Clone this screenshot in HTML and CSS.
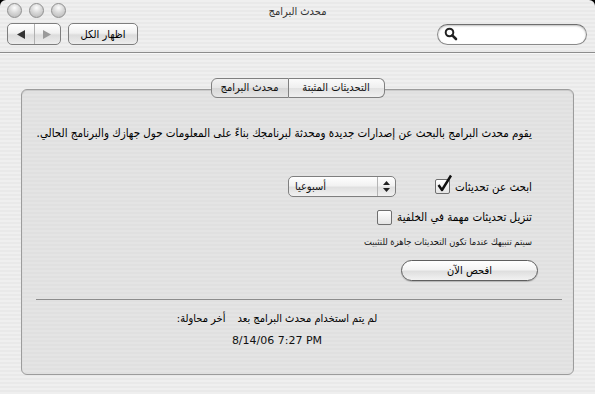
FILE: index.html
```html
<!DOCTYPE html>
<html lang="ar">
<head>
    <meta charset="UTF-8">
    <title>محدث البرامج</title>
    <link rel="stylesheet" href="styles.css">
</head>
<body>

<div class="window">
    <header class="chrome">
        <div class="titlebar">
            <div class="lights"><span></span><span></span><span></span></div>
            <div class="title" dir="rtl">محدث البرامج</div>
            <div></div>
        </div>
        <div class="toolbar">
            <div class="nav">
                <span class="nav-seg">
                    <svg width="10" height="9" viewBox="0 0 10 9"><path d="M1 4.5 L9 0 L9 9 Z" fill="#333"/></svg>
                </span>
                <span class="nav-seg">
                    <svg width="10" height="9" viewBox="0 0 10 9"><path d="M9 4.5 L1 0 L1 9 Z" fill="#9a9a9a"/></svg>
                </span>
            </div>
            <button class="tool-btn" dir="rtl">اظهار الكل</button>
            <div class="spacer"></div>
            <div class="search">
                <svg width="14" height="14" viewBox="0 0 14 14">
                    <circle cx="5.5" cy="5.5" r="3.8" fill="none" stroke="#222" stroke-width="2"/>
                    <path d="M8.3 8.3 L12 12" stroke="#222" stroke-width="2.6" stroke-linecap="round"/>
                </svg>
            </div>
        </div>
    </header>

    <main class="content">
        <div class="tabs">
            <span class="tab">محدث البرامج</span>
            <span class="tab tab-on">التحديثات المثبتة</span>
        </div>

        <section class="box">
            <p class="desc" dir="rtl">يقوم محدث البرامج بالبحث عن إصدارات جديدة ومحدثة لبرنامجك بناءً على المعلومات حول جهازك والبرنامج الحالي.</p>

            <div class="row row-check" dir="rtl">
                <span class="label">ابحث عن تحديثات</span>
                <span class="checkbox">
                    <svg width="18" height="20" viewBox="0 0 18 20"><path d="M3.5 11 L7 16 L16 1.5" fill="none" stroke="#111" stroke-width="2.4" stroke-linejoin="round"/></svg>
                </span>
                <span class="popup">
                    <span class="popup-arrows">
                        <svg width="7" height="11" viewBox="0 0 7 11"><path d="M3.5 0 L7 4 L0 4 Z M3.5 11 L7 7 L0 7 Z" fill="#222"/></svg>
                    </span>
                    <span class="popup-text">أسبوعيا</span>
                </span>
            </div>

            <div class="row row-bg" dir="rtl">
                <span class="label">تنزيل تحديثات مهمة في الخلفية</span>
                <span class="checkbox"></span>
            </div>

            <div class="row row-note" dir="rtl">
                <span class="note">سيتم تنبيهك عندما تكون التحديثات جاهزة للتثبيت</span>
            </div>

            <div class="row row-btn" dir="rtl">
                <button class="pill-btn">افحص الآن</button>
            </div>

            <hr class="sep">

            <div class="last" dir="rtl">
                <span>لم يتم استخدام محدث البرامج بعد</span>
                <span>أخر محاولة:</span>
            </div>
            <div class="date">8/14/06 7:27 PM</div>
        </section>
    </main>
</div>

</body>
</html>
```

FILE: styles.css
```css
html, body {
    margin: 0;
    background-color: #000;
}

body {
    font-family: "DejaVu Sans Condensed", "DejaVu Sans", sans-serif;
    color: #111;
    width: 595px;
    height: 394px;
    overflow: hidden;
}

.window {
    width: 595px;
    height: 394px;
    border-radius: 6px 6px 0 0;
    overflow: hidden;
    background: repeating-linear-gradient(to bottom, #efefef 0, #efefef 2px, #e9e9e9 2px, #e9e9e9 4px);
    display: flex;
    flex-direction: column;
}

/* title bar + toolbar */
.chrome {
    border-bottom: 1px solid #8c8c8c;
    box-shadow: 0 1px 0 #f8f8f8;
}

.titlebar {
    height: 22px;
    display: grid;
    grid-template-columns: 1fr auto 1fr;
    align-items: center;
}

.lights {
    display: flex;
    gap: 7px;
    padding-left: 7px;
    align-self: start;
    padding-top: 3px;
}

.lights span {
    width: 13px;
    height: 13px;
    border-radius: 50%;
    border: 1px solid #8f8f8f;
    background: radial-gradient(circle at 50% 30%, #fdfdfd 0, #d8d8d8 45%, #b4b4b4 100%);
}

.title {
    font-size: 11px;
    color: #333;
}

.toolbar {
    display: flex;
    align-items: center;
    height: 22px;
    padding: 1px 8px 7px 7px;
    gap: 7px;
}

.nav {
    display: flex;
    width: 54px;
    height: 22px;
    box-sizing: border-box;
    border: 1px solid #7e7e7e;
    border-radius: 5px;
    background: linear-gradient(to bottom, #ffffff 0%, #f1f1f1 45%, #dcdcdc 55%, #ededed 100%);
    overflow: hidden;
}

.nav-seg {
    flex: 1;
    display: flex;
    align-items: center;
    justify-content: center;
}

.nav-seg + .nav-seg {
    border-left: 1px solid #b0b0b0;
}

.tool-btn {
    width: 70px;
    height: 22px;
    border: 1px solid #7e7e7e;
    border-radius: 5px;
    background: linear-gradient(to bottom, #ffffff 0%, #f1f1f1 45%, #dcdcdc 55%, #ededed 100%);
    font-family: "DejaVu Sans Condensed", "DejaVu Sans", sans-serif;
    font-size: 11px;
    color: #000;
    padding: 0;
}

.spacer {
    flex: 1;
}

.search {
    width: 150px;
    height: 21px;
    box-sizing: border-box;
    border: 1px solid #8a8a8a;
    border-top-color: #6e6e6e;
    border-radius: 11px;
    background-color: #fff;
    box-shadow: inset 0 1px 2px rgba(0, 0, 0, 0.25);
    display: flex;
    align-items: center;
    padding-left: 6px;
}

/* pane */
.content {
    padding: 25px 21px 0 21px;
    flex: 1;
}

.tabs {
    display: flex;
    justify-content: center;
    position: relative;
    z-index: 1;
    margin-bottom: -9px;
}

.tab {
    height: 20px;
    box-sizing: border-box;
    border: 1px solid #808080;
    background: linear-gradient(to bottom, #fbfbfb 0%, #efefef 50%, #e2e2e2 51%, #f0f0f0 100%);
    font-size: 11px;
    line-height: 18px;
    display: flex;
    justify-content: center;
    width: 78px;
}

.tab:first-child {
    border-radius: 6px 0 0 6px;
    background: linear-gradient(to bottom, #f2f2f2 0%, #e4e4e4 50%, #d6d6d6 51%, #e6e6e6 100%);
}

.tab-on {
    width: 96px;
    border-left: 0;
    border-radius: 0 6px 6px 0;
}

.box {
    height: 286px;
    box-sizing: border-box;
    border: 1px solid #9c9c9c;
    border-radius: 6px;
    background: repeating-linear-gradient(to bottom, #e4e4e4 0, #e4e4e4 2px, #e0e0e0 2px, #e0e0e0 4px);
    box-shadow: inset 0 1px 1px rgba(0, 0, 0, 0.12);
    padding: 35px 41px 0 0;
}

.desc {
    margin: 0;
    font-size: 11.5px;
    line-height: 16px;
    white-space: nowrap;
    color: #000;
}

.row {
    display: flex;
    align-items: center;
}

.label {
    font-size: 11.5px;
    line-height: 16px;
    color: #000;
}

.row-check {
    margin-top: 35px;
    height: 21px;
}

.checkbox {
    width: 13px;
    height: 13px;
    border: 1px solid #6f6f6f;
    border-radius: 2px;
    background: linear-gradient(to bottom, #ffffff, #e4e4e4);
    margin-right: 5px;
    position: relative;
}

.checkbox svg {
    position: absolute;
    left: -1px;
    top: -6px;
}

.popup {
    margin-right: 39px;
    width: 108px;
    height: 21px;
    box-sizing: border-box;
    border: 1px solid #7f7f7f;
    border-radius: 5px;
    background: linear-gradient(to bottom, #ffffff 0%, #f2f2f2 45%, #e0e0e0 55%, #f1f1f1 100%);
    display: flex;
    align-items: center;
}

.popup-arrows {
    width: 17px;
    height: 100%;
    border-left: 1px solid #b5b5b5;
    display: flex;
    align-items: center;
    justify-content: center;
}

.popup-text {
    flex: 1;
    text-align: left;
    padding-left: 6px;
    font-size: 11px;
}

.row-bg {
    margin-top: 12px;
}

.row-note {
    margin-top: 10px;
}

.note {
    font-size: 9.3px;
    line-height: 14px;
}

.row-btn {
    margin-top: 11px;
    margin-right: -6px;
}

.pill-btn {
    width: 137px;
    height: 21px;
    border: 1px solid #5e5e5e;
    border-radius: 11px;
    background: linear-gradient(to bottom, #ffffff 0%, #f3f3f3 45%, #dfdfdf 55%, #f2f2f2 100%);
    box-shadow: 0 1px 1px rgba(0, 0, 0, 0.2);
    font-family: "DejaVu Sans Condensed", "DejaVu Sans", sans-serif;
    font-size: 11px;
    color: #000;
    padding: 0;
}

.sep {
    margin: 18px -30px 0 14px;
    border: 0;
    border-top: 1px solid #8d8d8d;
    height: 0;
}

.last {
    margin-top: 11px;
    display: flex;
    justify-content: center;
    gap: 12px;
    font-size: 11px;
    line-height: 16px;
    color: #000;
}

.date {
    margin-top: 6px;
    text-align: center;
    font-family: "DejaVu Sans", sans-serif;
    font-size: 11px;
    line-height: 16px;
}
```
